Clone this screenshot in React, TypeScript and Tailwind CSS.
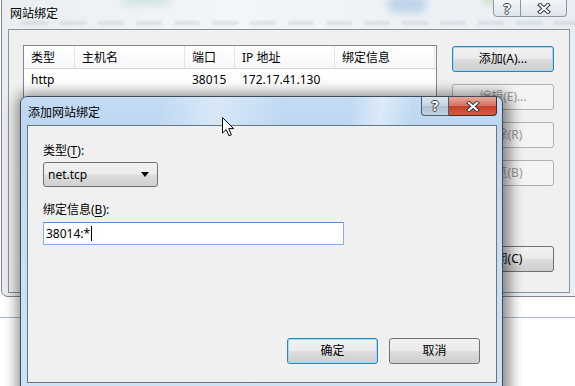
import React from 'react';

const font = { fontFamily: '"Noto Sans", "Noto Sans CJK SC", sans-serif' };

const btn =
  'flex items-center justify-center rounded-[3px] border text-[12px] leading-none bg-[linear-gradient(#f2f2f2_0%,#ebebeb_48%,#dddddd_52%,#cfcfcf_100%)]';

const Button = ({
  label,
  w,
  focused,
  disabled,
}: {
  label: React.ReactNode;
  w: string;
  focused?: boolean;
  disabled?: boolean;
}) => (
  <div
    className={`${btn} ${w} h-[26px] ${
      disabled
        ? 'border-[#adb2b5] text-[#9b9b9b] bg-[linear-gradient(#f4f4f4,#f4f4f4)]'
        : focused
          ? 'border-[#3c7fb1] text-black shadow-[inset_0_0_0_1px_#8ee0fb]'
          : 'border-[#707070] text-black'
    }`}
  >
    {label}
  </div>
);

const CloseGlyph = () => (
  <svg width="14" height="11" viewBox="0 0 14 11">
    <path d="M3 2 L11 9 M11 2 L3 9" stroke="#3a3a3a" strokeWidth="4" strokeLinecap="square" />
    <path d="M3 2 L11 9 M11 2 L3 9" stroke="#ffffff" strokeWidth="2" strokeLinecap="square" />
  </svg>
);

const Help = () => (
  <span className="text-[14px] font-bold leading-none text-white [text-shadow:1px_0_0_#3a4350,-1px_0_0_#3a4350,0_1px_0_#3a4350,0_-1px_0_#3a4350]">
    ?
  </span>
);

export default function App() {
  return (
    <div className="relative w-[575px] h-[386px] overflow-hidden bg-white" style={font}>
      {/* desktop behind */}
      <div className="absolute left-0 right-0 top-[317px] h-px bg-[#a9b8cf]" />

      {/* outer window: 网站绑定 */}
      <div className="absolute left-[1px] top-[-8px] w-[580px] h-[305px] rounded-[7px] border border-[#7c8691] bg-[linear-gradient(90deg,#eaeef2,#f3f6f9_40%,#e9eef3)] flex flex-col overflow-hidden">
        {/* blurred desktop seen through the glass */}
        <div className="absolute left-[120px] top-[0px] w-[50px] h-[12px] rounded-full bg-[#9ecfc0] opacity-40 blur-[4px]" />
        <div className="absolute left-[385px] top-[2px] w-[40px] h-[18px] rounded-full bg-[#8fb4dc] opacity-50 blur-[4px]" />
        <div className="absolute left-[480px] top-[0px] w-[20px] h-[12px] rounded-full bg-[#a8d6a0] opacity-40 blur-[3px]" />
        <div className="absolute left-[20px] top-[28px] w-[560px] h-[4px] bg-[repeating-linear-gradient(90deg,#b8c2cc_0px,#b8c2cc_26px,transparent_26px,transparent_38px)] opacity-40 blur-[1.5px]" />

        <div className="relative h-[36px] pl-[8px] pt-[13px] text-[12px] leading-[16px] text-black">网站绑定</div>
        <div className="absolute right-[13px] top-[5px] flex h-[19px]">
          <div className="w-[28px] flex items-center justify-center pt-[2px] rounded-bl-[4px] border border-[#8d97a3] bg-[linear-gradient(#f4f7fa,#dde4ec)]">
            <Help />
          </div>
          <div className="w-[46px] flex items-center justify-center pt-[2px] rounded-br-[4px] border border-l-0 border-[#8d97a3] bg-[linear-gradient(#f4f7fa,#dde4ec)]">
            <CloseGlyph />
          </div>
        </div>

        <div className="relative ml-[6px] w-[562px] h-[264px] border border-[#8a929c] bg-[#f0f0f0] flex gap-[15px] pl-[14px] pt-[15px]">
          <div className="w-[414px] h-[230px] border border-[#828790] bg-white flex flex-col">
            <div className="flex h-[23px] border-b border-[#d5d5d5] bg-[linear-gradient(#ffffff,#f6f7f9)] text-[12px] leading-[23px]">
              <div className="w-[51px] pl-[7px] border-r border-[#e3e5e8]">类型</div>
              <div className="w-[110px] pl-[7px] border-r border-[#e3e5e8]">主机名</div>
              <div className="w-[50px] pl-[7px] border-r border-[#e3e5e8]">端口</div>
              <div className="w-[100px] pl-[7px] border-r border-[#e3e5e8]">IP 地址</div>
              <div className="w-[100px] pl-[7px] border-r border-[#e3e5e8]">绑定信息</div>
            </div>
            <div className="flex h-[22px] text-[12px] leading-[22px]">
              <div className="w-[51px] pl-[7px]">http</div>
              <div className="w-[110px] pl-[7px]"></div>
              <div className="w-[50px] pl-[7px]">38015</div>
              <div className="w-[100px] pl-[7px]">172.17.41.130</div>
            </div>
          </div>
          <div className="flex flex-col gap-[12px] pt-[1px]">
            <Button label="添加(A)..." w="w-[102px]" focused />
            <Button label="编辑(E)..." w="w-[102px]" disabled />
            <Button label="删除(R)" w="w-[102px]" disabled />
            <Button label="浏览(B)" w="w-[102px]" disabled />
            <div className="mt-[48px]">
              <Button label="关闭(C)" w="w-[102px]" />
            </div>
          </div>
        </div>
      </div>

      {/* inner dialog: 添加网站绑定 */}
      <div className="absolute left-[20px] top-[96px] w-[483px] h-[300px] rounded-t-[7px] border border-[#3f4b59] bg-[linear-gradient(180deg,#c3dbf3_0px,#bdd7f1_30px,#c6ddf3_120px,#cfe3f6_300px)] shadow-[2px_2px_14px_5px_rgba(0,0,0,0.45)] flex flex-col">
        <div className="absolute left-[140px] top-0 w-[120px] h-[28px] bg-[linear-gradient(100deg,transparent,rgba(255,255,255,0.55)_45%,transparent)] opacity-70" />
        <div className="absolute left-[330px] top-0 w-[60px] h-[28px] bg-[linear-gradient(100deg,transparent,rgba(255,255,255,0.45)_50%,transparent)]" />
        <div className="relative h-[28px] pl-[7px] pt-[8px] text-[12px] leading-[16px] text-black">添加网站绑定</div>
        <div className="absolute right-[5px] top-0 flex h-[19px]">
          <div className="w-[28px] flex items-center justify-center rounded-bl-[4px] border border-t-0 border-[#4e5c6c] bg-[linear-gradient(#dbe5ef_0%,#c6d3e1_50%,#aebfd1_51%,#c4d3e2_100%)]">
            <Help />
          </div>
          <div className="w-[48px] flex items-center justify-center rounded-br-[4px] border border-t-0 border-l-0 border-[#4e2a24] bg-[linear-gradient(#e8a99c_0%,#d8705f_50%,#c7402c_51%,#d45a40_100%)]">
            <CloseGlyph />
          </div>
        </div>

        <div className="relative ml-[6px] w-[470px] h-[258px] border border-[#6b7683] bg-[#f0f0f0] flex flex-col px-[15px] pt-[17px] pb-[18px] text-[12px] text-black">
          <div className="leading-[16px]">
            类型(<span className="underline underline-offset-2">T</span>):
          </div>
          <div className={`${btn} mt-[3px] w-[115px] h-[25px] border-[#707070] !justify-between pl-[4px] pr-[8px]`}>
            <span>net.tcp</span>
            <svg width="8" height="5" viewBox="0 0 8 5">
              <path d="M0 0 L8 0 L4 5 Z" fill="#000" />
            </svg>
          </div>
          <div className="mt-[15px] leading-[16px]">
            绑定信息(<span className="underline underline-offset-2">B</span>):
          </div>
          <div className="mt-[4px] w-[301px] h-[23px] border border-[#7eb4ea] border-t-[#5593d1] bg-white flex items-center pl-[2px] leading-none">
            38014:*<span className="ml-[1px] w-px h-[15px] bg-black" />
          </div>
          <div className="mt-auto flex justify-end gap-[11px] pr-[1px]">
            <Button label="确定" w="w-[91px]" focused />
            <Button label="取消" w="w-[91px]" />
          </div>
        </div>
      </div>

      {/* mouse pointer */}
      <svg className="absolute left-[222px] top-[117px]" width="13" height="20" viewBox="0 0 13 20">
        <path d="M0.5 0.5 L0.5 16 L4.2 12.6 L7 18.8 L9.4 17.8 L6.7 11.6 L11.5 11.6 Z" fill="#fff" stroke="#000" strokeWidth="1" strokeLinejoin="miter" />
      </svg>
    </div>
  );
}
